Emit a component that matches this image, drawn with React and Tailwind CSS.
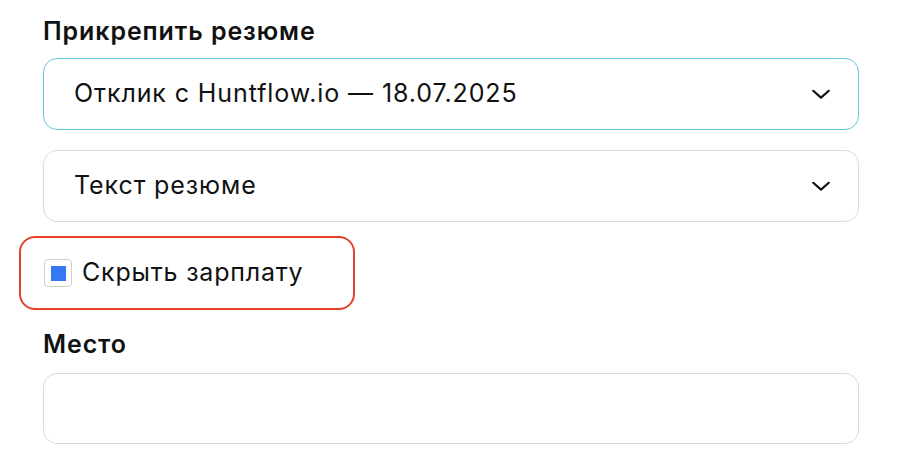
import React from 'react';

const Chevron = () => (
  <svg width="22" height="22" viewBox="0 0 24 24" fill="none" stroke="#111" strokeWidth="2.4" strokeLinecap="round" strokeLinejoin="round">
    <path d="M3.5 8.5l8.5 7.5 8.5-7.5" />
  </svg>
);

const Select = ({ value, focused }) => (
  <div
    className={`h-[72px] w-full rounded-[14px] border bg-white flex items-center justify-between pl-[30px] pr-[26px] ${
      focused ? 'border-[#63c7dd]' : 'border-[#dadada]'
    }`}
  >
    <span className="text-[25px] text-[#111] tracking-[0.9px]">{value}</span>
    <Chevron />
  </div>
);

export default function App() {
  return (
    <div className="w-[900px] h-[468px] bg-white overflow-hidden" style={{ fontFamily: 'Inter, "Noto Sans", sans-serif' }}>
      <div className="pl-[43px] pr-[41px] pt-[17px]">
        <h3 className="text-[25px] font-semibold text-[#111] leading-[28px] tracking-[0.9px]">Прикрепить резюме</h3>
        <div className="mt-[13px]">
          <Select value="Отклик с Huntflow.io — 18.07.2025" focused />
        </div>
        <div className="mt-[20px]">
          <Select value="Текст резюме" />
        </div>

        <div className="-ml-[24px] mt-[14px] w-[336px] h-[74px] rounded-[16px] border-2 border-[#e5412d] flex items-center pl-[23px]">
          <div className="w-[28px] h-[28px] rounded-[4px] border border-[#cfcfcf] bg-white flex items-center justify-center">
            <div className="w-[15px] h-[15px] bg-[#3478f6]" />
          </div>
          <span className="ml-[10px] text-[25px] text-[#111] tracking-[0.8px]">Скрыть зарплату</span>
        </div>

        <h3 className="mt-[20px] text-[25px] font-semibold text-[#111] leading-[28px] tracking-[0.9px]">Место</h3>
        <div className="mt-[15px] h-[71px] w-full rounded-[14px] border border-[#dadada] bg-white" />
      </div>
    </div>
  );
}
